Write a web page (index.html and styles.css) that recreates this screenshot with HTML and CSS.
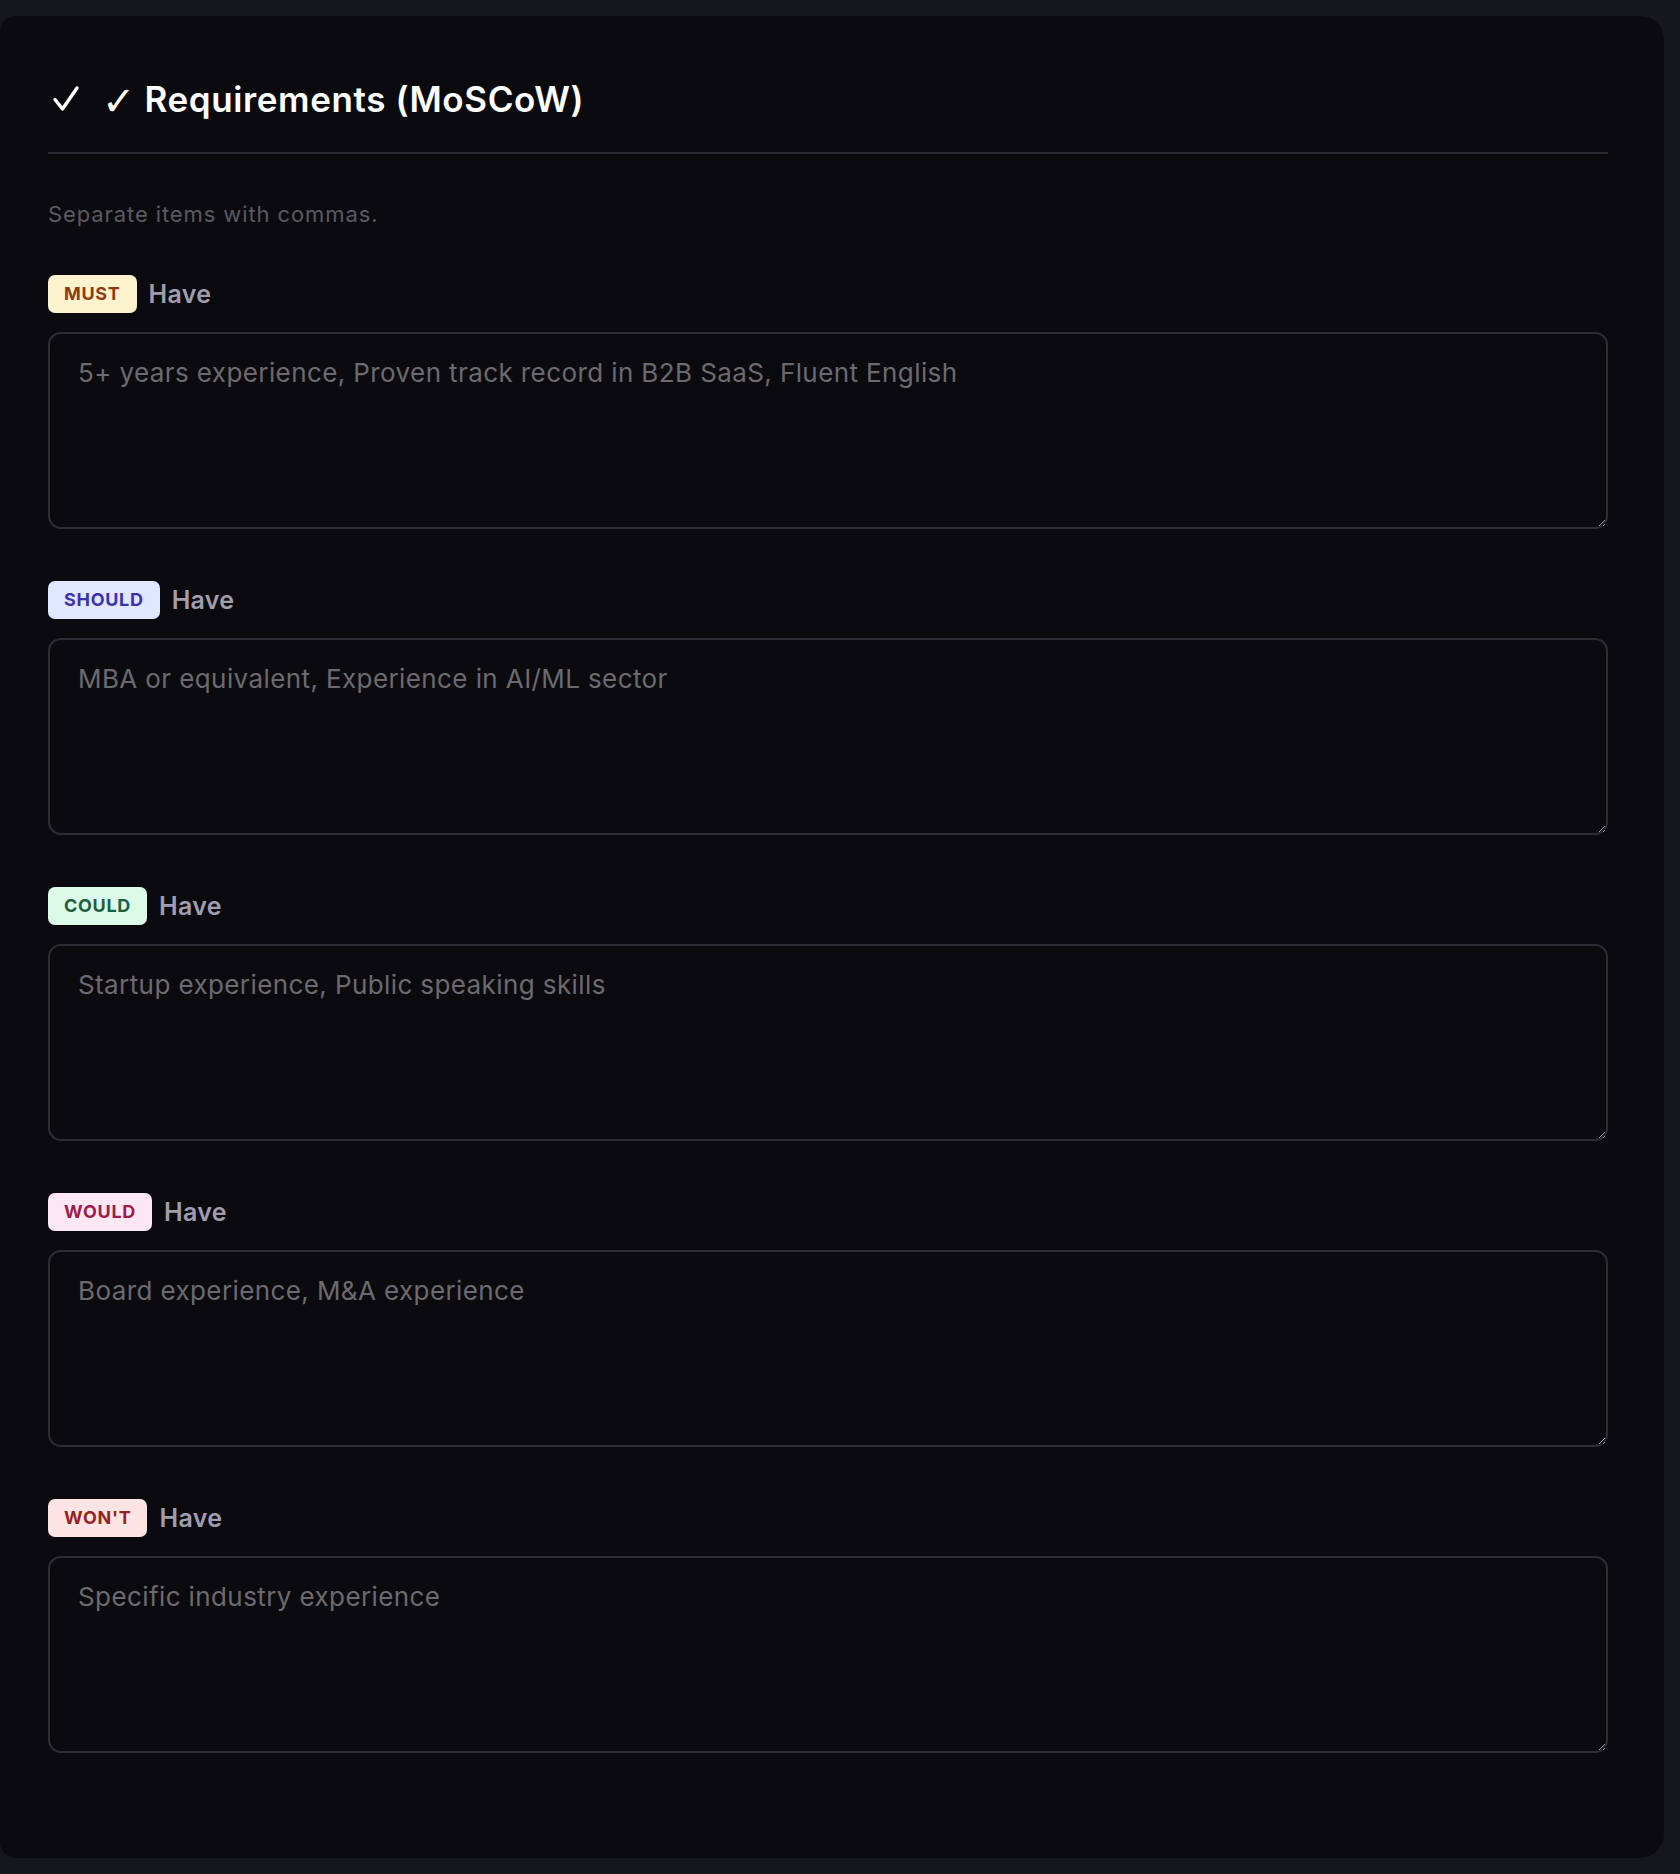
FILE: index.html
```html
<!DOCTYPE html>
<html lang="en">
<head>
  <meta charset="UTF-8" />
  <title>Requirements (MoSCoW)</title>
  <link rel="stylesheet" href="styles.css">
</head>
<body>

  <div class="card">
    <div class="card-header">
      <svg class="icon-check" viewBox="0 0 28 28" width="28" height="28" aria-hidden="true">
        <path d="M3 14.5 L10.5 24 L25 3" fill="none" stroke="#fff" stroke-width="3.4" stroke-linecap="round" stroke-linejoin="round"/>
      </svg>
      <h2><span class="tick">✓</span>Requirements (MoSCoW)</h2>
    </div>

    <p class="hint">Separate items with commas.</p>

    <div class="req">
      <label class="req-label"><span class="badge must">Must</span> Have</label>
      <textarea placeholder="5+ years experience, Proven track record in B2B SaaS, Fluent English"></textarea>
    </div>

    <div class="req">
      <label class="req-label"><span class="badge should">Should</span> Have</label>
      <textarea placeholder="MBA or equivalent, Experience in AI/ML sector"></textarea>
    </div>

    <div class="req">
      <label class="req-label"><span class="badge could">Could</span> Have</label>
      <textarea placeholder="Startup experience, Public speaking skills"></textarea>
    </div>

    <div class="req">
      <label class="req-label"><span class="badge would">Would</span> Have</label>
      <textarea placeholder="Board experience, M&amp;A experience"></textarea>
    </div>

    <div class="req">
      <label class="req-label"><span class="badge wont">Won't</span> Have</label>
      <textarea placeholder="Specific industry experience"></textarea>
    </div>
  </div>

</body>
</html>
```

FILE: styles.css
```css
html {
  color-scheme: dark;
}
body {
  margin: 0;
  padding: 16px 16px 18px 0;
  background: #16171c;
  font-family: Inter, "Noto Sans", sans-serif;
  color: #fff;
}
.card {
  width: 1664px;
  box-sizing: border-box;
  background: #0b0b0f;
  border-radius: 16px 24px 24px 16px;
  padding: 48px 56px 53px 48px;
}
.card-header {
  display: flex;
  align-items: flex-start;
  gap: 22px;
  padding-left: 4px;
  height: 88px;
  border-bottom: 2px solid #2c2b33;
}
.icon-check {
  margin-top: 21px;
}
h2 {
  margin: 10px 0 0;
  font-size: 35px;
  font-weight: 600;
  line-height: 50px;
  letter-spacing: 0.6px;
}
.tick {
  display: inline-block;
  font-family: "DejaVu Sans", sans-serif;
  font-weight: 400;
  font-size: 40px;
  line-height: 1;
  vertical-align: -3px;
  margin-right: 9px;
  letter-spacing: 0;
}
.hint {
  margin: 45px 0 46px;
  font-size: 22px;
  line-height: 30px;
  letter-spacing: 0.9px;
  color: #5a5963;
}
.req {
  margin-bottom: 52px;
}
.req-label {
  display: flex;
  align-items: center;
  gap: 12px;
  font-size: 25px;
  font-weight: 600;
  letter-spacing: 0.3px;
  color: #a09dae;
  margin-bottom: 19px;
}
.badge {
  display: inline-block;
  height: 38px;
  line-height: 38px;
  padding: 0 16px;
  border-radius: 7px;
  font-size: 18px;
  font-weight: 700;
  text-transform: uppercase;
  letter-spacing: 0.7px;
}
.must { background: #fdf3cf; color: #8c3d13; }
.should { background: #e0e7ff; color: #3b34a8; }
.could { background: #dcfae8; color: #1f5f40; }
.would { background: #fce7f3; color: #9d1b4e; }
.wont { background: #fde4e4; color: #972222; }
textarea {
  display: block;
  width: 100%;
  height: 197px;
  box-sizing: border-box;
  background: #0b0b0f;
  border: 2px solid #2e2d36;
  border-radius: 13px;
  padding: 20px 28px;
  font-family: Inter, "Noto Sans", sans-serif;
  font-size: 26px;
  line-height: 38px;
  letter-spacing: 0.4px;
  color: #ddd;
}
textarea::placeholder {
  color: #6b6a70;
}
```
